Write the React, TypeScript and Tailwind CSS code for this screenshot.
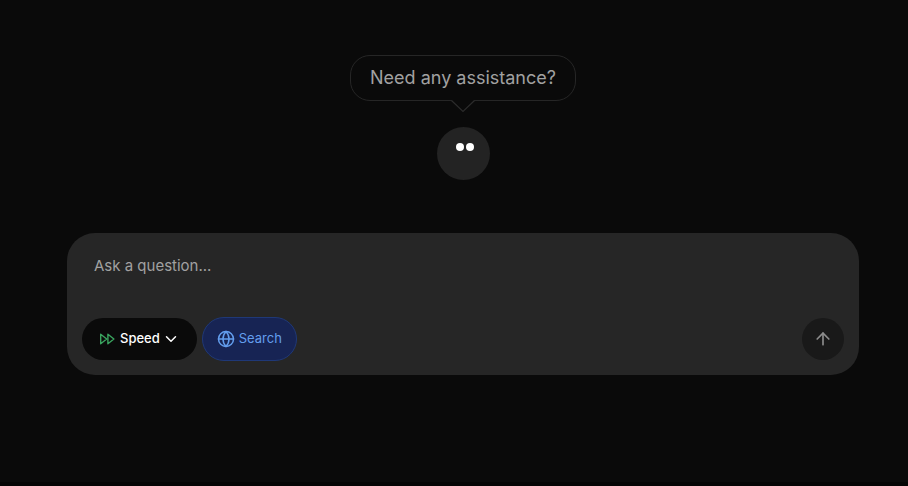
import { useState } from "react";
import { ArrowUp, ChevronDown, Globe } from "lucide-react";

function FastForwardIcon() {
  return (
    <svg
      className="text-[#3aa45f]"
      width="16"
      height="16"
      viewBox="0 0 16 16"
      fill="none"
      stroke="currentColor"
      strokeWidth="1.4"
      strokeLinejoin="round"
      aria-hidden="true"
    >
      <path d="M1.7 3.200 7.700 8l-6 4.800z" />
      <path d="M8.900 3.200 14.900 8l-6 4.800z" />
    </svg>
  );
}

function SpeechBubble({ text }: { text: string }) {
  return (
    <div className="relative rounded-[20px] border border-neutral-800 px-[19px] py-2">
      <p className="text-[18px] leading-7 text-neutral-400">{text}</p>
      <svg
        className="absolute top-full left-1/2 -translate-x-1/2"
        width="26"
        height="14"
        viewBox="0 0 26 14"
        fill="none"
        aria-hidden="true"
      >
        <path d="M1.500 0h23L13 11.500z" fill="#0a0a0a" />
        <path d="M1.500 .5 13 11.500 24.500 .5" stroke="#2c2c2c" strokeWidth="1.2" />
      </svg>
    </div>
  );
}

function Avatar() {
  return (
    <div className="flex size-[53px] justify-center gap-0.5 rounded-full bg-[#232323] pt-4 pl-1">
      <span className="size-2 rounded-full bg-white" />
      <span className="size-2 rounded-full bg-white" />
    </div>
  );
}

export default function App() {
  const [question, setQuestion] = useState("");
  const [search, setSearch] = useState(true);

  return (
    <main className="flex min-h-screen flex-col items-center border-b-4 border-[#050505] bg-neutral-950 pt-[55px] pr-[49px] pl-[67px] font-['Inter',sans-serif]">
      <SpeechBubble text="Need any assistance?" />
      <div className="mt-[26px]">
        <Avatar />
      </div>

      <form
        onSubmit={(e) => e.preventDefault()}
        className="mt-[53px] w-full rounded-[28px] bg-neutral-800 px-[15px] pt-[21px] pb-3.5"
      >
        <textarea
          aria-label="Ask a question"
          value={question}
          onChange={(e) => setQuestion(e.target.value)}
          placeholder="Ask a question..."
          rows={2}
          className="block h-[63px] w-full resize-none bg-transparent px-3 text-[15px] leading-6 text-neutral-100 outline-none placeholder:text-neutral-400"
        />
        <div className="flex items-center gap-[5px]">
          <button
            type="button"
            className="flex h-[42px] items-center rounded-full bg-neutral-950 px-[17px] text-[13px] font-medium text-white"
          >
            <FastForwardIcon />
            <span className="mr-0.5 ml-[5px]">Speed</span>
            <ChevronDown size={18} />
          </button>
          <button
            type="button"
            aria-pressed={search}
            onClick={() => setSearch(!search)}
            className="flex h-11 items-center gap-1 rounded-full border border-[#1f3877] bg-[#172454] px-3.5 text-[13px] text-[#639eee]"
          >
            <Globe size={18} />
            Search
          </button>
          <button
            type="submit"
            aria-label="Send"
            className="ml-auto flex size-[42px] items-center justify-center rounded-full bg-[#191919] text-[#8c8c8c]"
          >
            <ArrowUp size={20} />
          </button>
        </div>
      </form>
    </main>
  );
}
